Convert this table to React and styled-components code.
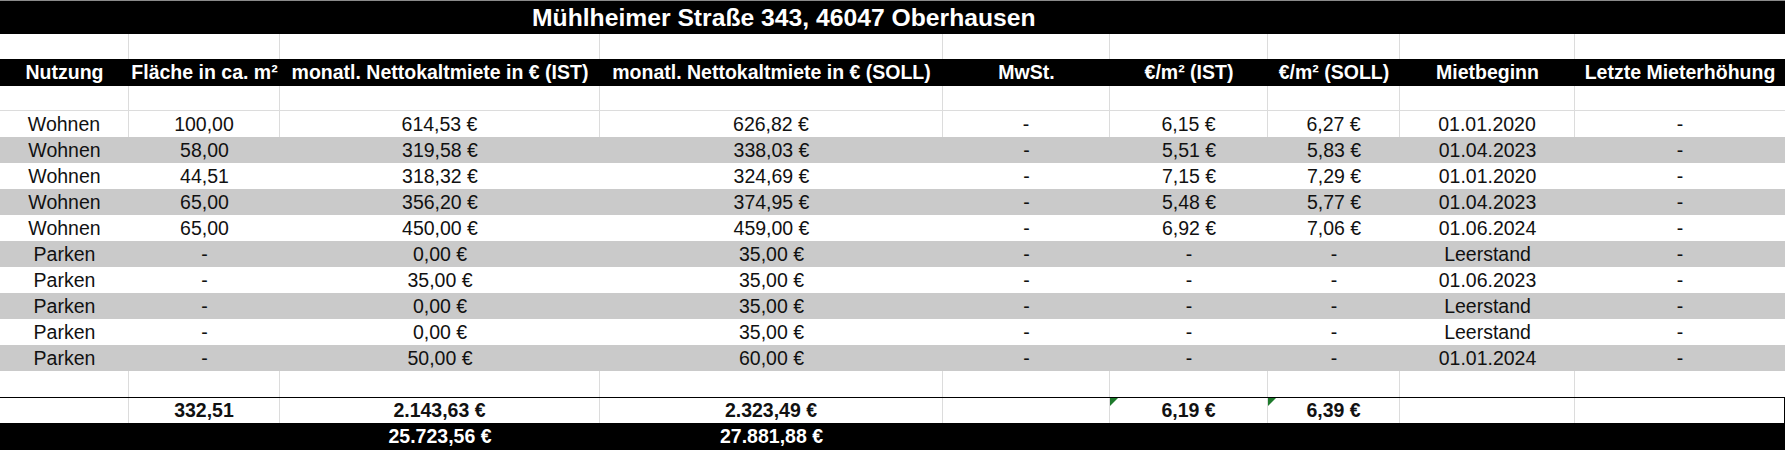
import React from 'react'
import styled, { createGlobalStyle } from 'styled-components'

const GlobalStyle = createGlobalStyle`
    html, body {
        margin: 0;
        padding: 0;
        background: #ffffff;
    }
    body {
        font-family: "Liberation Sans", Arial, sans-serif;
        color: #111111;
    }
`

const COLS = '129px 151px 320px 343px 167px 158px 132px 175px 210px'
const GRID = '#dcdcdc'

const headers = [
    'Nutzung',
    'Fläche in ca. m²',
    'monatl. Nettokaltmiete in € (IST)',
    'monatl. Nettokaltmiete in € (SOLL)',
    'MwSt.',
    '€/m² (IST)',
    '€/m² (SOLL)',
    'Mietbeginn',
    'Letzte Mieterhöhung',
]

const units = [
    ['Wohnen', '100,00', '614,53 €', '626,82 €', '-', '6,15 €', '6,27 €', '01.01.2020', '-'],
    ['Wohnen', '58,00', '319,58 €', '338,03 €', '-', '5,51 €', '5,83 €', '01.04.2023', '-'],
    ['Wohnen', '44,51', '318,32 €', '324,69 €', '-', '7,15 €', '7,29 €', '01.01.2020', '-'],
    ['Wohnen', '65,00', '356,20 €', '374,95 €', '-', '5,48 €', '5,77 €', '01.04.2023', '-'],
    ['Wohnen', '65,00', '450,00 €', '459,00 €', '-', '6,92 €', '7,06 €', '01.06.2024', '-'],
    ['Parken', '-', '0,00 €', '35,00 €', '-', '-', '-', 'Leerstand', '-'],
    ['Parken', '-', '35,00 €', '35,00 €', '-', '-', '-', '01.06.2023', '-'],
    ['Parken', '-', '0,00 €', '35,00 €', '-', '-', '-', 'Leerstand', '-'],
    ['Parken', '-', '0,00 €', '35,00 €', '-', '-', '-', 'Leerstand', '-'],
    ['Parken', '-', '50,00 €', '60,00 €', '-', '-', '-', '01.01.2024', '-'],
]

const totals = ['', '332,51', '2.143,63 €', '2.323,49 €', '', '6,19 €', '6,39 €', '', '']
const yearly = ['', '', '25.723,56 €', '27.881,88 €', '', '', '', '', '']

function App() {
    return (
        <>
            <GlobalStyle />
            <Sheet>
                <TitleBar>Mühlheimer Straße 343, 46047 Oberhausen</TitleBar>
                <BlankRows />
                <Row $h={27} $bg="#000" $color="#fff" $bold>
                    {headers.map((h) => <Cell key={h}>{h}</Cell>)}
                </Row>
                <BlankRows bottomLine />
                {units.map((r, i) => (
                    <Row key={i} $h={26} $bg={i % 2 ? '#cacaca' : '#fff'}>
                        {r.map((v, j) => <Cell key={j} $line={i === 0 && j < 8}>{v}</Cell>)}
                    </Row>
                ))}
                <BlankRows h={26} />
                <TotalRow $h={26} $bold>
                    {totals.map((v, j) => (
                        <Cell key={j} $line={j < 8} $flag={j === 5 || j === 6}>{v}</Cell>
                    ))}
                </TotalRow>
                <Row $h={27} $bg="#000" $color="#fff" $bold>
                    {yearly.map((v, j) => <Cell key={j}>{v}</Cell>)}
                </Row>
            </Sheet>
        </>
    )
}

function BlankRows({ h = 25, bottomLine }) {
    return (
        <Row $h={h} $bottom={bottomLine}>
            {headers.map((_, j) => <Cell key={j} $line={j < 8} />)}
        </Row>
    )
}

export default App

const Sheet = styled.div`
    width: 1785px;
    display: flex;
    flex-direction: column;
`

const TitleBar = styled.div`
    height: 33px;
    border-top: 1px solid #8a8a8a;
    background: #000;
    color: #fff;
    font-weight: 700;
    font-size: 24.7px;
    display: flex;
    align-items: center;
    padding-left: 532px;
    white-space: nowrap;
`

const Row = styled.div`
    display: grid;
    grid-template-columns: ${COLS};
    height: ${(p) => p.$h}px;
    box-sizing: border-box;
    background: ${(p) => p.$bg || '#fff'};
    color: ${(p) => p.$color || '#111'};
    font-weight: ${(p) => (p.$bold ? 700 : 400)};
    font-size: 19.5px;
    border-bottom: ${(p) => (p.$bottom ? `1px solid ${GRID}` : 'none')};
`

const TotalRow = styled(Row)`
    border-top: 1px solid #000;
    border-right: 1px solid #000;
`

const Cell = styled.div`
    position: relative;
    display: flex;
    align-items: center;
    justify-content: center;
    white-space: nowrap;
    box-sizing: border-box;
    border-right: ${(p) => (p.$line ? `1px solid ${GRID}` : 'none')};

    ${(p) => p.$flag && `
        &::before {
            content: '';
            position: absolute;
            top: 0;
            left: 0;
            border-top: 8px solid #1e7a2c;
            border-right: 8px solid transparent;
        }
    `}
`
